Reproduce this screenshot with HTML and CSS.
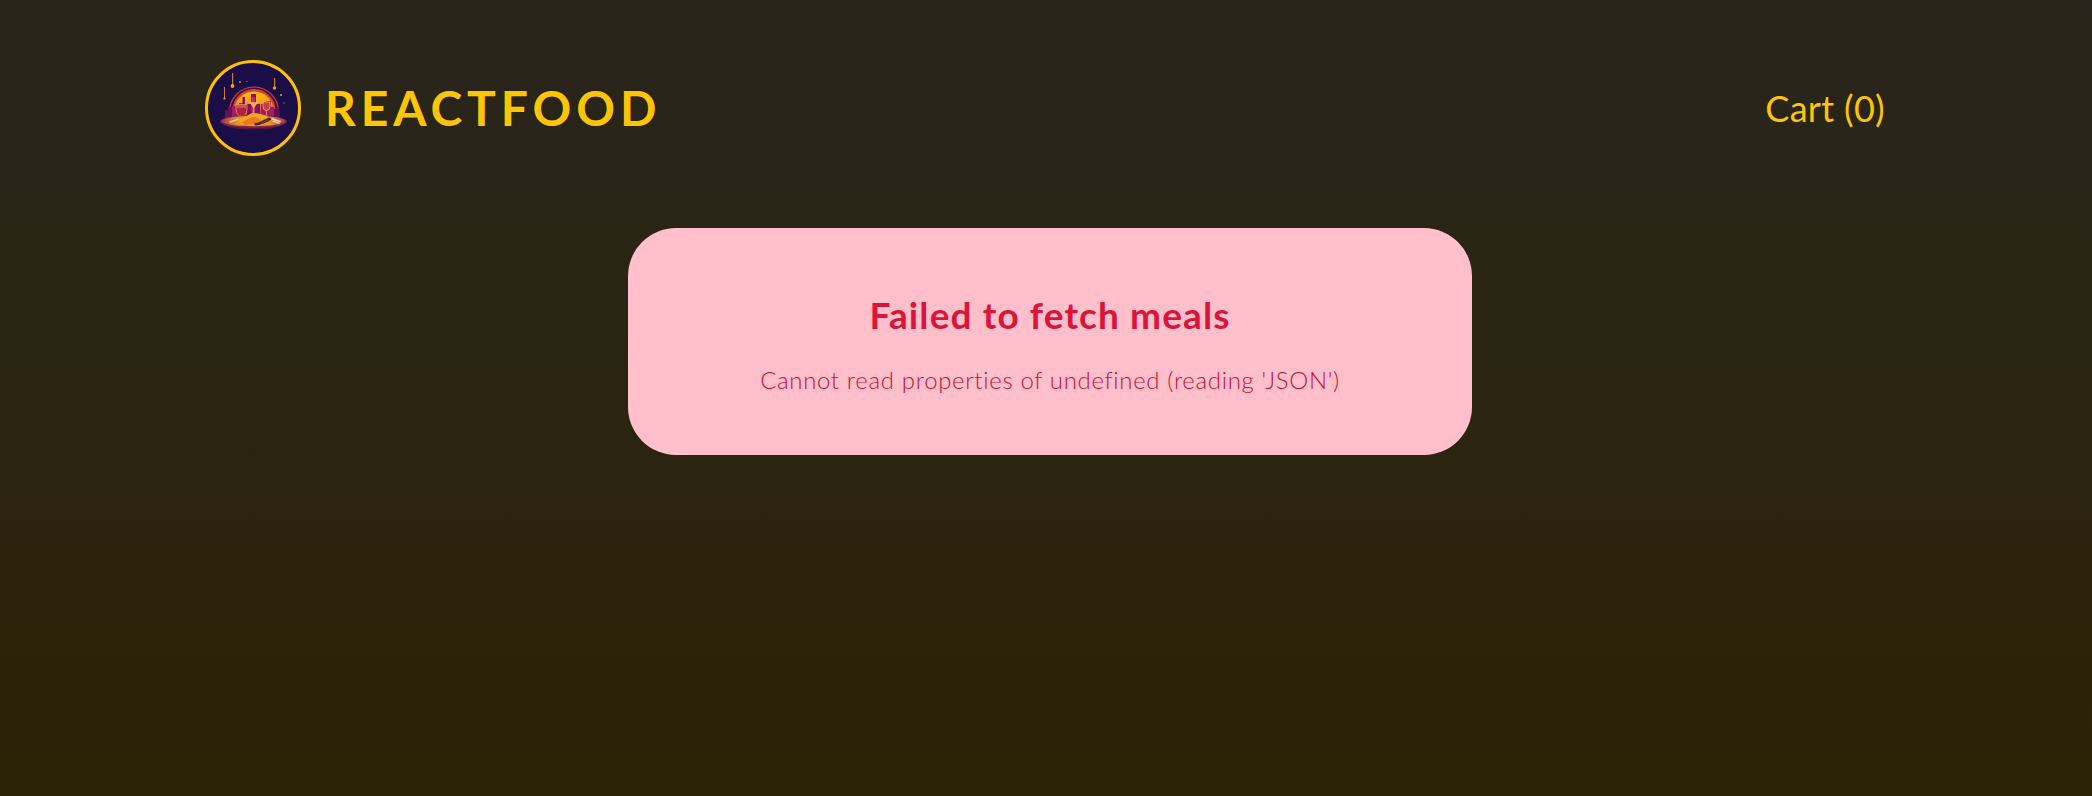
FILE: index.html
```html
<!DOCTYPE html>
<html lang="en">
<head>
<meta charset="utf-8">
<title>ReactFood</title>
<link rel="stylesheet" href="styles.css">
</head>
<body>
<header class="main-header">
  <div class="brand">
    <svg class="logo" viewBox="0 0 96 96" role="img" aria-label="A restaurant">
      <defs>
        <linearGradient id="sun" x1="0" y1="0" x2="0" y2="1">
          <stop offset="0" stop-color="#ffb80f"/>
          <stop offset=".4" stop-color="#f9a01a"/>
          <stop offset=".7" stop-color="#e5502a"/>
          <stop offset="1" stop-color="#a81a58"/>
        </linearGradient>
        <linearGradient id="plate" x1="0" y1="0" x2="1" y2="0">
          <stop offset="0" stop-color="#a83a3a"/>
          <stop offset=".25" stop-color="#e8961c"/>
          <stop offset=".75" stop-color="#e8961c"/>
          <stop offset="1" stop-color="#a83f48"/>
        </linearGradient>
      </defs>
      <circle cx="48" cy="48" r="46.500" fill="#1a0d48" stroke="#ffc107" stroke-width="3"/>
      <path d="M23 58V52a26 26 0 0 1 52 0v6" fill="#3a0f50"/>
      <path d="M24.500 58V52a24.500 25 0 0 1 49 0v6" fill="none" stroke="#d0402a" stroke-width="1.200"/>
      <path d="M27 58V52a22 23 0 0 1 44 0v6z" fill="#d8462c"/>
      <path d="M29 58V52a20 20.500 0 0 1 40 0v6z" fill="url(#sun)"/>
      <path d="M20 58V50h3v-3h4v11zM67 58V49h3v-2h4v11z" fill="#5e1258"/>
      <path d="M27 58V46h7v-3h6v15zM56 58V44h5v-3h5v6h3v11z" fill="#a01c64"/>
      <path d="M37.500 58V37h2.500v21zM42 58V44h4V34h5v10h4v14z" fill="#7c1460"/>
      <path d="M46.500 58V37h3.500v21z" fill="#d12c54"/>
      <path d="M31 44.500h11v5q-.5 6.500-5.500 6.500T31 49.500z" fill="#b3203f" stroke="#e8b8a0" stroke-width=".6"/>
      <path d="M31.500 45h10v3h-10z" fill="#d8503f"/>
      <path d="M45 42.500h7.500l-3.700 5.500z" fill="#f3a832" stroke="#ecd0b0" stroke-width=".5"/>
      <path d="M48.800 48v8" stroke="#ecd0b0" stroke-width=".6" fill="none"/>
      <path d="M58 42h7v4.500q0 4-3.500 4t-3.500-4z" fill="#c9402c" stroke="#ecd0b0" stroke-width=".6"/>
      <path d="M61.500 50.500v6" stroke="#ecd0b0" stroke-width=".6" fill="none"/>
      <ellipse cx="48.500" cy="66" rx="26" ry="3.500" fill="#5a1240"/>
      <ellipse cx="48.500" cy="61.500" rx="33.500" ry="6.500" fill="#7d2450"/>
      <ellipse cx="48.500" cy="61" rx="31.500" ry="5.200" fill="url(#plate)"/>
      <path d="M33 60c5-3 9-4 14-7 7 0 13 2 17 4l-8 5-8 3-11-1z" fill="#f6a61c"/>
      <path d="M37 62l10-5c5 0 7 2 9 3l-7 4-9 1z" fill="#e87a1e"/>
      <path d="M49 63.500c5-1 10-4 15-6l3 1.500c-4 3-11 6-17 6.500z" fill="#4a1f18"/>
      <path d="M52 63l9-4M56 63l7-3" stroke="#96582a" stroke-width=".8" fill="none"/>
      <path d="M67 58l9 3-1 1.400-9-3zM68 60.500l7 2.500-1 1-7-2.500z" fill="#e0d2c8"/>
      <path d="M24 61.500l9-3 .7 1.200-8.500 3.300z" fill="#c8c0cc"/>
      <path d="M27 13h1.200v13H27zM69 18h1.200v10H69zM19 27h1v11h-1z" fill="#c47e1c"/>
      <circle cx="27.500" cy="26" r="1.900" fill="#f0a01c"/>
      <circle cx="69.500" cy="28" r="1.700" fill="#f0a01c"/>
      <circle cx="19.500" cy="38.500" r="1.100" fill="#f0a01c"/>
      <circle cx="35" cy="22" r=".9" fill="#f0a01c"/>
      <circle cx="42" cy="21.500" r=".6" fill="#f0a01c"/>
      <circle cx="76" cy="35" r="1" fill="#f0a01c"/>
      <circle cx="79" cy="43" r=".8" fill="#d8561e"/>
    </svg>
    <h1 class="title">REACTFOOD</h1>
  </div>
  <nav><button class="cart">Cart (0)</button></nav>
</header>
<section class="error">
  <h2 class="error-title">Failed to fetch meals</h2>
  <p class="error-text">Cannot read properties of undefined (reading 'JSON')</p>
</section>
</body>
</html>
```
FILE: styles.css
```css
* { box-sizing: border-box; }
html { height: 100%; }
body {
  margin: 0;
  min-height: 100vh;
  background: linear-gradient(#29251c, #2c2306);
  font-family: "Lato", sans-serif;
}
.main-header {
  display: flex;
  justify-content: space-between;
  align-items: center;
  padding: 60px 207px 60px 205px;
}
.brand { display: flex; align-items: center; gap: 24px; }
.logo { display: block; width: 96px; height: 96px; }
.title {
  margin: 0;
  color: #ffc404;
  font-size: 48px;
  font-weight: 700;
  letter-spacing: 4.900px;
  line-height: 1.2;
}
.cart {
  padding: 0;
  border: 0;
  background: none;
  color: #ffc404;
  font: 36px "Lato", sans-serif;
  letter-spacing: .3px;
}
.error {
  width: 844px;
  margin: 12px 0 0 628px;
  padding: 62px 24px 57px;
  border-radius: 48px;
  background: #ffc0cb;
  color: #dc143c;
  text-align: center;
}
.error-title { margin: 0 0 22px; font-size: 37px; font-weight: 700; letter-spacing: 1.100px; line-height: 50px; }
.error-text { margin: 0; color: #cf0c35; font-size: 24px; font-weight: 300; letter-spacing: .65px; line-height: 36px; }
```
